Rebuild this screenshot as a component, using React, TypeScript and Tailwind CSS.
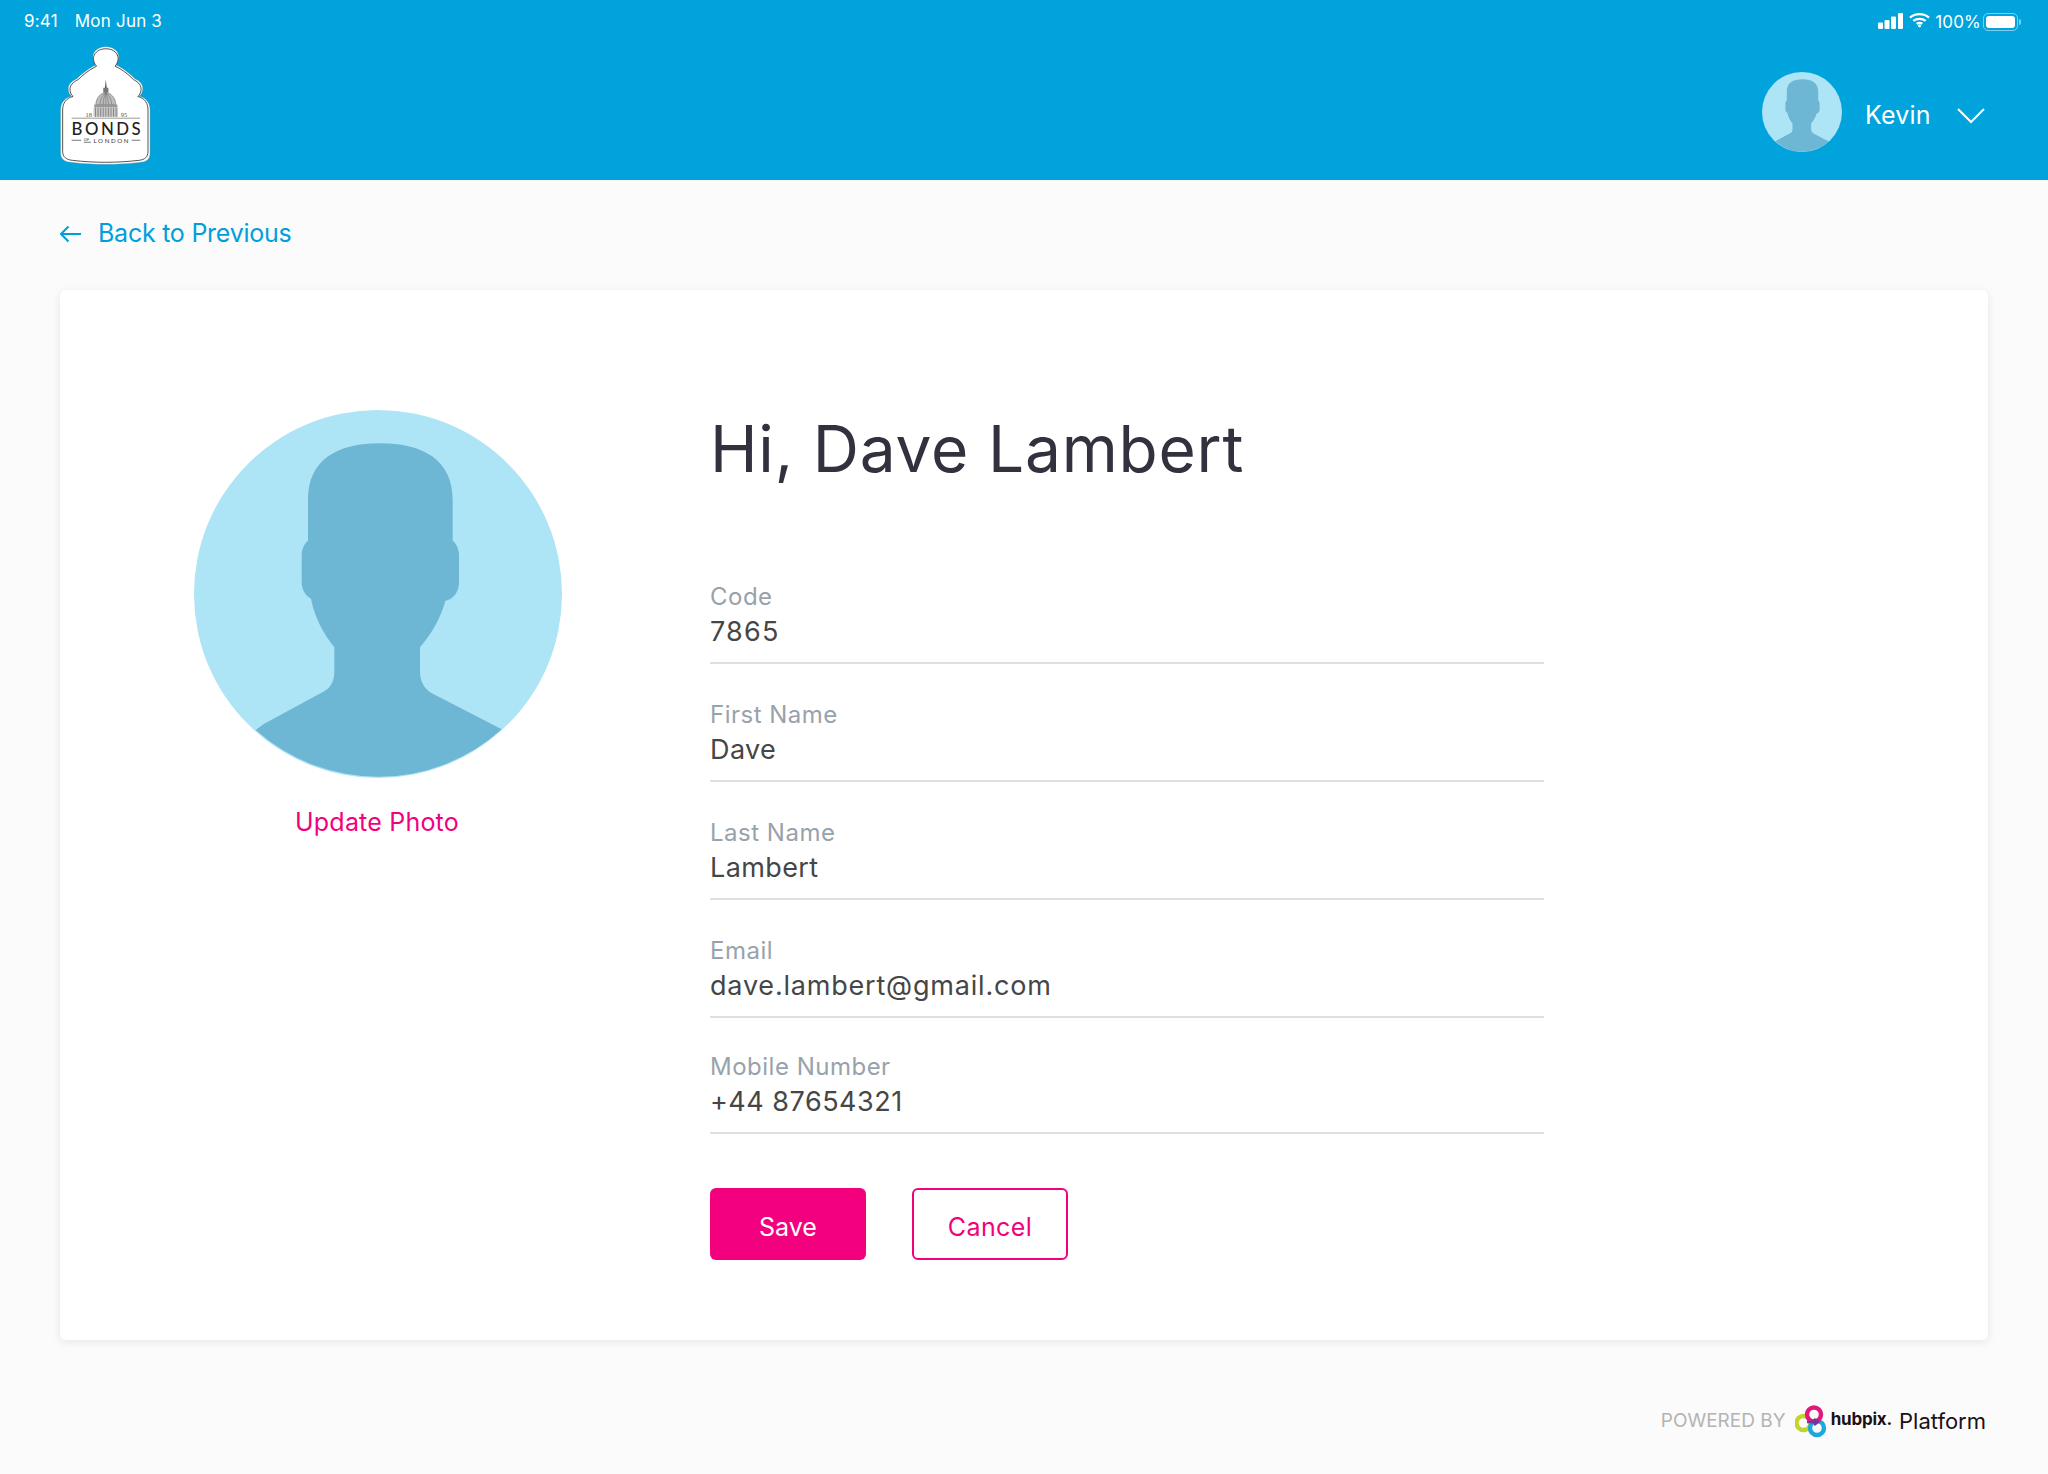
const FONT = "font-['Inter','Liberation_Sans',sans-serif]";

function Silhouette({ className }: { className: string }) {
  return (
    <svg viewBox="72 60 1104 1104" className={className}>
      <circle cx="624" cy="612" r="552" fill="#ade4f6" />
      <path
        fill="#6eb7d4"
        d="M414 330 C414 210 500 160 630 160 C760 160 848 210 848 330 L848 452 C860 462 867 478 867 495 L867 578 C867 605 850 628 826 632 C812 685 785 730 750 772 L750 845 C750 875 765 900 790 912 L995 1018 A552 552 0 0 1 257 1020 L280 1003 L460 905 C480 895 493 875 493 845 L493 772 C460 730 435 685 423 626 C405 615 395 598 395 575 L395 495 C395 478 402 462 414 452 Z"
      />
    </svg>
  );
}

const JAR =
  "M168 22 C195 22 208 38 208 52 C208 62 204 70 198 76 C225 88 245 105 258 118 C275 125 285 138 282 152 C280 160 278 165 272 170 C295 175 305 192 305 212 L305 340 C305 358 295 366 275 368 C205 376 130 376 60 368 C40 366 28 358 28 340 L28 212 C28 192 38 175 62 170 C55 165 52 158 52 150 C50 136 62 125 78 118 C92 105 112 88 138 76 C132 70 128 62 128 52 C128 38 142 22 168 22 Z";

function Logo() {
  const ribs = [136, 144, 152, 160, 168, 176, 184, 192, 200];
  return (
    <svg viewBox="26 20 282 356" preserveAspectRatio="none" className="w-[91px] h-[119px]">
      <path d={JAR} fill="#fff" stroke="#8a8a8a" strokeWidth="1" />
      <path d={JAR} fill="#fff" stroke="#2d2d2d" strokeWidth="2.6" transform="translate(166 199) scale(0.955 0.965) translate(-166 -199)" />
      <path d="M168 120 L171 150 L165 150 Z" fill="#444" />
      <rect x="160" y="145" width="16" height="14" fill="#777" />
      <path d="M137 195 C138 175 152 160 168 159 C184 160 198 175 199 195 Z" fill="#bdbdbd" stroke="#555" strokeWidth="1.5" />
      <path d="M150 195 C150 180 158 166 168 160 C178 166 186 180 186 195 M160 195 C160 180 164 168 168 160 C172 168 176 180 176 195 M168 160 L168 195" fill="none" stroke="#555" strokeWidth="1.4" />
      <rect x="132" y="195" width="72" height="9" fill="#999" />
      <rect x="130" y="204" width="76" height="28" fill="#c9c9c9" />
      {ribs.map((x) => (
        <path key={x} d={`M${x} 204 L${x} 232`} stroke="#666" strokeWidth="2" />
      ))}
      <path d="M62 236 L274 236" stroke="#666" strokeWidth="2" />
      <text x="105" y="232" fontSize="20" fill="#555" fontFamily="Liberation Serif, serif">18</text>
      <text x="214" y="232" fontSize="20" fill="#555" fontFamily="Liberation Serif, serif">95</text>
      <text x="62" y="285" fontSize="52" fontWeight="500" fill="#222" textLength="214" lengthAdjust="spacing" fontFamily="Lato, sans-serif">BONDS</text>
      <text x="130" y="309" fontSize="19" fill="#333" textLength="108" lengthAdjust="spacing" fontFamily="Lato, sans-serif">LONDON</text>
      <text x="100" y="305" fontSize="12" fill="#333" fontFamily="Lato, sans-serif">OF</text>
      <path d="M62 302 L92 302 M248 302 L275 302 M100 308 L122 308" stroke="#333" strokeWidth="2" />
    </svg>
  );
}

function StatusIcons() {
  return (
    <div className="flex items-center">
      <svg viewBox="0 0 25 16" className="w-[25px] h-[16px] mb-[3px]" fill="#fff">
        <rect x="0" y="9.5" width="5" height="6.5" rx="1" />
        <rect x="6.5" y="7" width="5" height="9" rx="1" />
        <rect x="13" y="3.5" width="5" height="12.5" rx="1" />
        <rect x="20" y="0" width="5" height="16" rx="1" />
      </svg>
      <svg viewBox="0 0 22 16" className="w-[21px] h-[16px] ml-[6px] mb-[5px]" fill="none" stroke="#fff" strokeWidth="2.4">
        <path d="M1 5.5 C6.5 0.5 15.5 0.5 21 5.5" />
        <path d="M4.5 9 C8 6 14 6 17.5 9" />
        <path d="M8 12 C9.8 10.8 12.2 10.8 14 12" />
        <circle cx="11" cy="14" r="1.6" fill="#fff" stroke="none" />
      </svg>
      <span className="text-white text-[17px] ml-[5px] mt-[2px]">100%</span>
      <div className="ml-[2px] flex items-center">
        <div className="w-[35px] h-[18px] rounded-[5px] border border-[#7fd0ee] p-[2px]">
          <div className="h-full w-full rounded-[3px] bg-white" />
        </div>
        <div className="w-[2px] h-[6px] rounded-r-sm bg-[#7fd0ee] ml-px" />
      </div>
    </div>
  );
}

function HubpixLogo() {
  return (
    <svg viewBox="0 0 32 33" className="w-[32px] h-[33px]" fill="none">
      <circle cx="8.5" cy="18" r="7" stroke="#c4d52a" strokeWidth="4.4" />
      <circle cx="22" cy="23" r="7" stroke="#1ea7de" strokeWidth="4.4" />
      <circle cx="19" cy="9.5" r="7" stroke="#e01a7d" strokeWidth="4.4" />
      <path d="M12 17 L22 17 M19 14 L23 17 L19 20" stroke="#6b3a9a" strokeWidth="2.6" />
    </svg>
  );
}

function Field({ label, value, track, mt }: { label: string; value: string; track: string; mt: string }) {
  return (
    <div className={`border-b-2 border-[#dfdfdf] h-[85px] ${mt}`}>
      <div className="text-[24px] leading-[36px] text-[#98a2ab] tracking-[0.5px]">{label}</div>
      <div className={`text-[27px] leading-[36px] -mt-[1px] text-[#464646] ${track}`}>{value}</div>
    </div>
  );
}

export default function App() {
  return (
    <div className={`w-[2048px] h-[1474px] bg-[#fbfbfb] flex flex-col overflow-hidden ${FONT}`}>
      <header className="h-[180px] shrink-0 bg-[#00a3dc] flex flex-col">
        <div className="h-[44px] flex items-center justify-between pl-[24px] pr-[27px] text-white text-[17px] tracking-[0.2px]">
          <div className="flex gap-[17px]">
            <span>9:41</span>
            <span>Mon Jun 3</span>
          </div>
          <StatusIcons />
        </div>
        <div className="flex justify-between items-start pl-[60px] pr-[63px]">
          <div className="mt-[2px]">
            <Logo />
          </div>
          <div className="flex items-center mt-[28px]">
            <Silhouette className="w-[80px] h-[80px]" />
            <span className="ml-[23px] w-[65px] mt-[7px] text-white text-[25px] font-normal tracking-[0.2px]">Kevin</span>
            <svg viewBox="0 0 28 16" className="w-[28px] h-[16px] ml-[27px] mt-[7px]" fill="none" stroke="#fff" strokeWidth="2">
              <path d="M1 1 L14 14 L27 1" />
            </svg>
          </div>
        </div>
      </header>

      <main className="flex-1 px-[60px] flex flex-col">
        <a className="flex items-center h-[110px] pb-[3px] text-[#009fdb] text-[25px] -tracking-[0.25px]">
          <svg viewBox="0 0 22 18" className="w-[22px] h-[18px] mr-[16px]" fill="none" stroke="#009fdb" strokeWidth="2">
            <path d="M21 9 L1 9 M8.5 1.5 L1 9 L8.5 16.5" />
          </svg>
          Back to Previous
        </a>

        <section className="h-[1050px] bg-white rounded-[6px] shadow-[0_2px_10px_rgba(0,0,0,0.09)] flex">
          <div className="w-[650px] pl-[134px] pt-[120px] shrink-0">
            <Silhouette className="w-[368px] h-[368px]" />
            <div className="w-[368px] -ml-px text-center mt-[26px] text-[25px] leading-[36px] text-[#f2007e] tracking-[0.2px]">Update Photo</div>
          </div>
          <div className="w-[834px] pt-[120px]">
            <h1 className="text-[64px] leading-[76px] font-normal text-[#32323f] tracking-[0.8px] mt-[1px]">Hi, Dave Lambert</h1>
            <Field label="Code" value="7865" track="tracking-[1.2px]" mt="mt-[92px]" />
            <Field label="First Name" value="Dave" track="tracking-[0.4px]" mt="mt-[33px]" />
            <Field label="Last Name" value="Lambert" track="tracking-[0.4px]" mt="mt-[33px]" />
            <Field label="Email" value="dave.lambert@gmail.com" track="tracking-[0.8px]" mt="mt-[33px]" />
            <Field label="Mobile Number" value="+44 87654321" track="tracking-[0.5px]" mt="mt-[31px]" />
            <div className="flex gap-[46px] mt-[54px]">
              <button className="w-[156px] h-[72px] pt-[7px] rounded-[6px] bg-[#f2007e] text-white text-[25px]">Save</button>
              <button className="w-[156px] h-[72px] pt-[7px] rounded-[6px] border-2 border-[#f2007e] text-[#f2007e] text-[25px] tracking-[0.4px]">Cancel</button>
            </div>
          </div>
        </section>

        <footer className="flex-1 flex items-center justify-end pr-[2px] pt-[28px]">
          <span className="text-[19px] text-[#b4b4b4]">POWERED BY</span>
          <div className="ml-[9px]"><HubpixLogo /></div>
          <span className="ml-[4px] -mt-[3px] text-[17px] font-bold text-[#1c1018] -tracking-[0.2px]">hubpix.</span>
          <span className="ml-[7px] text-[22px] text-[#1c1018]">Platform</span>
        </footer>
      </main>
    </div>
  );
}
